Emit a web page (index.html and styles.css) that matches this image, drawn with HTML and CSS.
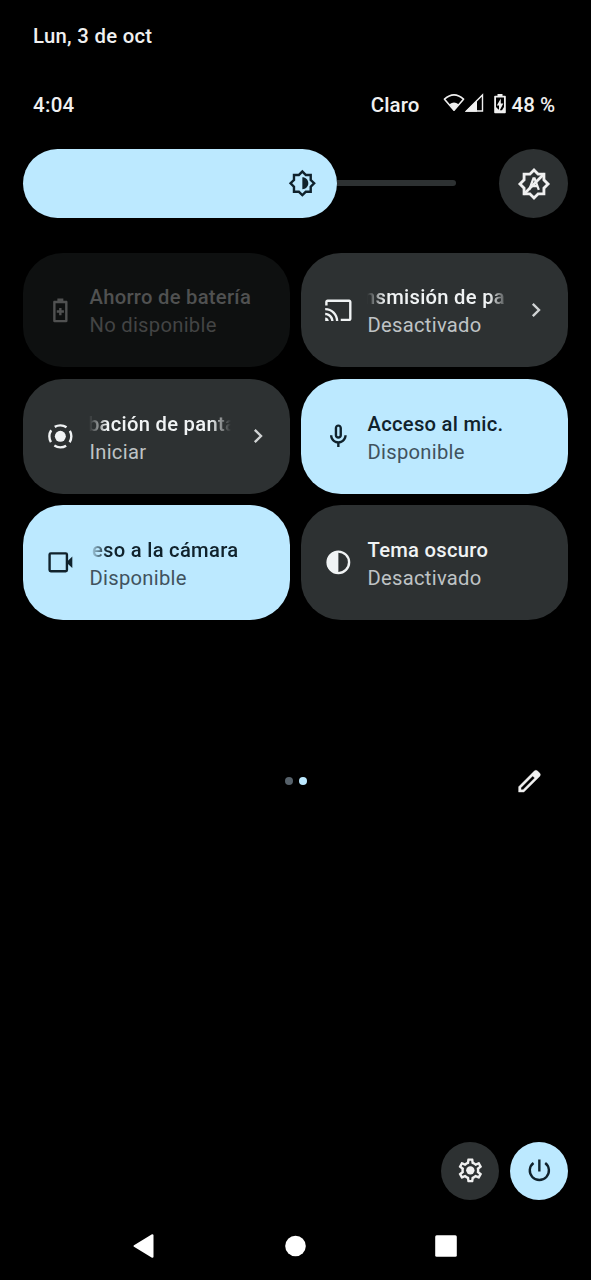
FILE: index.html
```html
<!DOCTYPE html>
<html lang="es">
<head>
<meta charset="utf-8">
<title>Ajustes rápidos</title>
<link rel="stylesheet" href="styles.css">
</head>
<body>
<main class="shade">
  <header class="date">Lun, 3 de oct</header>
  <div class="status">
    <span class="clock">4:04</span>
    <div class="system">
      <span class="carrier">Claro</span>
      <svg class="wifi" viewBox="0 0 22 20"><path d="M1.500 6.200Q11-2.400 20.500 6.200L11 17.200Z" fill="none" stroke="currentColor" stroke-width="1.600" stroke-linejoin="round"/><path d="M6.500 11.200Q11 7.800 15.500 11.200L11 17.700Z" fill="currentColor"/></svg>
      <svg class="signal" viewBox="0 0 19 20"><path d="M1.500 18H17.500V2Z" fill="none" stroke="currentColor" stroke-width="1.400"/><path d="M0 18.700H12V7.500Z" fill="currentColor"/></svg>
      <svg class="battery" viewBox="0 0 12 20"><path fill="currentColor" fill-rule="evenodd" d="M3.500 0h5v1.800H11a.8.8 0 0 1 .8.8V18.500a.8.8 0 0 1-.8.800H1a.8.8 0 0 1-.8-.8V2.600a.8.8 0 0 1 .8-.8h2.500zM2 3.600V13l2.500 2.500H5V11.500H2.800L6.800 4.500V9.500H9.300L5.800 16.200H8L10 13V3.600z"/></svg>
      <span>48 %</span>
    </div>
  </div>

  <div class="brightness">
    <div class="slider">
      <div class="level">
        <svg class="icon" viewBox="0 0 24 24"><path d="M20 8.690V4h-4.690L12 .69 8.690 4H4v4.690L.69 12 4 15.310V20h4.690L12 23.310 15.310 20H20v-4.690L23.310 12 20 8.690zm-2 5.790V18h-3.520L12 20.480 9.520 18H6v-3.520L3.520 12 6 9.520V6h3.520L12 3.520 14.480 6H18v3.520L20.480 12 18 14.480zM12 7c2.800 0 5 2.200 5 5s-2.200 5-5 5z"/></svg>
      </div>
      <div class="track"></div>
    </div>
    <div class="auto">
      <svg viewBox="0 0 24 24"><path d="M20 8.690V4h-4.690L12 .69 8.690 4H4v4.690L.69 12 4 15.310V20h4.690L12 23.310 15.310 20H20v-4.690L23.310 12 20 8.690zm-2 5.790V18h-3.520L12 20.480 9.520 18H6v-3.520L3.520 12 6 9.520V6h3.520L12 3.520 14.480 6H18v3.520L20.480 12 18 14.480z"/><path class="slash" d="M4.800 19.200L19.200 4.800"/><path class="letter" d="M8.600 16.200L11.600 8H12.400L15.400 16.200M10 13.500H14.200"/></svg>
    </div>
  </div>

  <section class="tiles">
    <div class="tile disabled">
      <svg class="icon" viewBox="0 0 24 24"><path d="M17 4H14.500V2h-5v2H7c-.6 0-1 .4-1 1V21c0 .6.400 1 1 1h10c.6 0 1-.4 1-1V5c0-.6-.4-1-1-1zM16 20H8V6h8zM11 16h2v-2h2v-2h-2V10h-2v2H9v2h2z"/></svg>
      <div class="label"><div class="title">Ahorro de batería</div><div class="state">No disponible</div></div>
    </div>
    <div class="tile">
      <svg class="icon" viewBox="0 0 24 24"><path d="M21 3H3c-1.100 0-2 .9-2 2v3h2V5h18v14h-7v2h7c1.100 0 2-.9 2-2V5c0-1.100-.9-2-2-2zM1 18v3h3c0-1.660-1.340-3-3-3zm0-4v2c2.760 0 5 2.240 5 5h2c0-3.870-3.130-7-7-7zm0-4v2c4.970 0 9 4.030 9 9h2c0-6.080-4.930-11-11-11z"/></svg>
      <div class="label"><div class="title marquee"><span class="shift-cast">nsmisión de pa</span></div><div class="state">Desactivado</div></div>
      <svg class="chevron" viewBox="0 0 10 16"><path d="M1.800 1.800L8 8L1.800 14.200"/></svg>
    </div>
    <div class="tile">
      <svg class="icon" viewBox="0 0 24 24"><circle cx="12" cy="12" r="4.600"/><circle class="line ring" cx="12" cy="12" r="9.200"/></svg>
      <div class="label"><div class="title marquee"><span class="shift-record">bación de panta</span></div><div class="state">Iniciar</div></div>
      <svg class="chevron" viewBox="0 0 10 16"><path d="M1.800 1.800L8 8L1.800 14.200"/></svg>
    </div>
    <div class="tile active">
      <svg class="icon" viewBox="0 0 24 24"><path d="M12 14c1.660 0 3-1.340 3-3V5c0-1.660-1.340-3-3-3S9 3.340 9 5v6c0 1.660 1.340 3 3 3zm-1-9c0-.55.45-1 1-1s1 .45 1 1v6c0 .55-.45 1-1 1s-1-.45-1-1V5zm6 6c0 2.760-2.240 5-5 5s-5-2.240-5-5H5c0 3.530 2.610 6.430 6 6.920V21h2v-3.080c3.390-.49 6-3.390 6-6.920h-2z"/></svg>
      <div class="label"><div class="title">Acceso al mic.</div><div class="state">Disponible</div></div>
    </div>
    <div class="tile active">
      <svg class="icon" viewBox="0 0 24 24"><rect class="line" x="3" y="4.500" width="14.500" height="15" rx="1"/><path d="M17.500 11.500L22 7.200v9.600L17.500 12.500z"/></svg>
      <div class="label"><div class="title marquee marquee-start"><span class="shift-camera">eso a la cámara</span></div><div class="state">Disponible</div></div>
    </div>
    <div class="tile">
      <svg class="icon" viewBox="0 0 24 24"><circle class="line" cx="12" cy="12" r="9"/><path d="M12 2.500a9.500 9.500 0 0 0 0 19z"/></svg>
      <div class="label"><div class="title">Tema oscuro</div><div class="state">Desactivado</div></div>
    </div>
  </section>

  <div class="pager">
    <span></span>
    <div class="dots"><i class="dot"></i><i class="dot current"></i></div>
    <svg class="edit" viewBox="0 0 24 24"><path fill-rule="evenodd" d="M3 21v-4.500L16.300 3.200q1.200-1 2.400 0l2.100 2.100q1 1.200 0 2.400L7.500 21zM5 19h1.700L16.500 9.200 14.800 7.500 5 17.300z"/></svg>
  </div>

  <footer class="actions">
    <div class="round"><svg class="icon" viewBox="0 0 24 24"><circle cx="12" cy="12" r="3.500"/><path d="M19.430 12.980c.04-.32.07-.64.07-.98s-.03-.66-.07-.98l2.110-1.650c.19-.15.24-.42.12-.64l-2-3.460c-.09-.16-.26-.25-.44-.25-.06 0-.12.01-.17.03l-2.490 1c-.52-.4-1.080-.73-1.690-.98l-.38-2.650C14.460 2.180 14.250 2 14 2h-4c-.25 0-.46.18-.49.42l-.38 2.650c-.61.25-1.170.59-1.690.98l-2.490-1c-.06-.02-.12-.03-.18-.03-.17 0-.34.09-.43.25l-2 3.460c-.13.22-.07.49.12.64l2.110 1.650c-.04.32-.07.65-.07.98s.03.66.07.98l-2.110 1.650c-.19.15-.24.42-.12.64l2 3.460c.09.16.26.25.44.25.06 0 .12-.01.17-.03l2.490-1c.52.4 1.080.73 1.690.98l.38 2.650c.03.24.24.42.49.42h4c.25 0 .46-.18.49-.42l.38-2.650c.61-.25 1.170-.59 1.690-.98l2.490 1c.06.02.12.03.18.03.17 0 .34-.09.43-.25l2-3.460c.12-.22.07-.49-.12-.64l-2.110-1.650zm-1.980-1.710c.04.31.05.52.05.73 0 .21-.02.43-.05.73l-.14 1.130.89.7 1.080.84-.7 1.210-1.270-.51-1.040-.42-.9.68c-.43.32-.84.56-1.250.73l-1.060.43-.16 1.130-.2 1.350h-1.400l-.19-1.350-.16-1.130-1.060-.43c-.43-.18-.83-.41-1.230-.71l-.91-.7-1.060.43-1.270.51-.7-1.210 1.080-.84.89-.7-.14-1.130c-.03-.31-.05-.54-.05-.74s.02-.43.05-.73l.14-1.130-.89-.7-1.080-.84.7-1.210 1.270.51 1.040.42.9-.68c.43-.32.84-.56 1.250-.73l1.060-.43.16-1.130.2-1.350h1.390l.19 1.350.16 1.130 1.060.43c.43.18.83.41 1.230.71l.91.7 1.060-.43 1.270-.51.7 1.210-1.070.85-.89.7.14 1.130z"/></svg></div>
    <div class="round power"><svg class="icon" viewBox="0 0 24 24"><path class="line" d="M12 3v10M7.100 5.800A8 8 0 1 0 16.900 5.800"/></svg></div>
  </footer>

  <nav class="navbar">
    <svg viewBox="0 0 24 26"><path d="M2.500 13L20.500 2.200V23.800Z" stroke="#fff" stroke-width="2" stroke-linejoin="round"/></svg>
    <svg viewBox="0 0 24 26"><circle cx="12.500" cy="13" r="10.300"/></svg>
    <svg viewBox="0 0 24 26"><rect x="1.200" y="2.200" width="21.600" height="21.600" rx="1.500"/></svg>
  </nav>
</main>
</body>
</html>
```
FILE: styles.css
```css
body {
  margin: 0;
  background: #000;
  color: #f0f0f0;
  font: 500 20px/28px Roboto, sans-serif;
}
svg { display: block; flex: none; fill: currentColor; }
.shade {
  box-sizing: border-box;
  height: 1280px;
  padding: 22px 23px 0;
  display: flex;
  flex-direction: column;
  overflow: hidden;
}
.date { padding-left: 10px; font-size: 20.300px; letter-spacing: .3px; }
.status {
  display: flex;
  justify-content: space-between;
  margin-top: 41px;
  padding: 0 13px 0 10px;
  font-size: 20.500px;
}
.clock { letter-spacing: .3px; }
.system { display: flex; align-items: center; }
.carrier { margin-right: 23px; letter-spacing: .1px; }
.wifi { width: 22px; height: 20px; margin-top: -4px; }
.signal { width: 19px; height: 20px; margin: -4px 10px 0 0; }
.battery { width: 12px; height: 20px; margin: -2px 6px 0 0; }
.brightness {
  display: flex;
  justify-content: space-between;
  height: 69px;
  margin-top: 30px;
}
.slider { display: flex; align-items: center; width: 433px; }
.level {
  box-sizing: border-box;
  width: 313.500px;
  height: 69px;
  padding-right: 20px;
  border-radius: 35px;
  background: #bce9ff;
  color: #10222c;
  display: flex;
  align-items: center;
  justify-content: flex-end;
}
.track { flex: 1; height: 6px; margin-bottom: 1px; border-radius: 0 3px 3px 0; background: #2d3132; }
.auto {
  width: 69px;
  border-radius: 50%;
  background: #2d3132;
  display: grid;
  place-items: center;
}
.auto svg { width: 34px; height: 34px; }
.slash { fill: none; stroke: currentColor; stroke-width: 1.900; }
.letter { fill: none; stroke: currentColor; stroke-width: 1.600; }
.icon { width: 28.700px; height: 28.700px; }
.line { fill: none; stroke: currentColor; stroke-width: 2; }
.ring { stroke-dasharray: 10.400 4.051; stroke-dashoffset: 5.200; }
.tiles {
  display: grid;
  grid-template-columns: 267px 267px;
  grid-auto-rows: 114.800px;
  gap: 11.500px 11px;
  margin-top: 34.700px;
}
.tile {
  box-sizing: border-box;
  display: flex;
  align-items: center;
  padding: 0 27px 0 23px;
  border-radius: 40px;
  background: #2d3132;
  color: #f0f3f4;
}
.disabled { background: #0e1010; color: #505151; }
.active { background: #bce9ff; color: #10222c; }
.label { flex: 1; min-width: 0; margin-left: 14.800px; padding-top: 2.500px; white-space: nowrap; }
.title { font-size: 20.200px; letter-spacing: .28px; }
.state { font-size: 20.200px; font-weight: 400; letter-spacing: .28px; color: #bfc3c5; }
.disabled .state { color: #434444; }
.active .state { color: #41535e; }
.marquee {
  overflow: hidden;
  margin-right: 22px;
  -webkit-mask-image: linear-gradient(90deg, transparent, #000 18px, #000 calc(100% - 20px), transparent);
  mask-image: linear-gradient(90deg, transparent, #000 18px, #000 calc(100% - 20px), transparent);
}
.marquee-start {
  margin-right: 0;
}
.shift-cast { margin-left: -3.500px; }
.shift-record { margin-left: -1.500px; }
.shift-camera { margin-left: 2.500px; }
.chevron { width: 10px; height: 16px; }
.chevron path { fill: none; stroke: #d0d3d4; stroke-width: 2.400; }
.pager {
  display: grid;
  grid-template-columns: 1fr auto 1fr;
  align-items: center;
  height: 30px;
  margin-top: 146px;
}
.dots { display: flex; gap: 6px; }
.dot { width: 8px; height: 8px; border-radius: 50%; background: #56616a; }
.current { background: #bce9ff; }
.edit { width: 28.700px; height: 28.700px; justify-self: end; margin: 0 24px 0 0; }
.edit path { stroke: currentColor; stroke-width: .3; }
.actions { display: flex; justify-content: flex-end; gap: 11px; margin-top: 345.500px; }
.round {
  width: 58px;
  height: 58px;
  border-radius: 50%;
  background: #2d3132;
  display: grid;
  place-items: center;
}
.power { background: #bce9ff; color: #10222c; }
.navbar {
  display: flex;
  justify-content: space-between;
  margin-top: 33px;
  padding: 0 110px 0 109px;
  color: #fff;
}
.navbar svg { width: 24px; height: 26px; }
```
